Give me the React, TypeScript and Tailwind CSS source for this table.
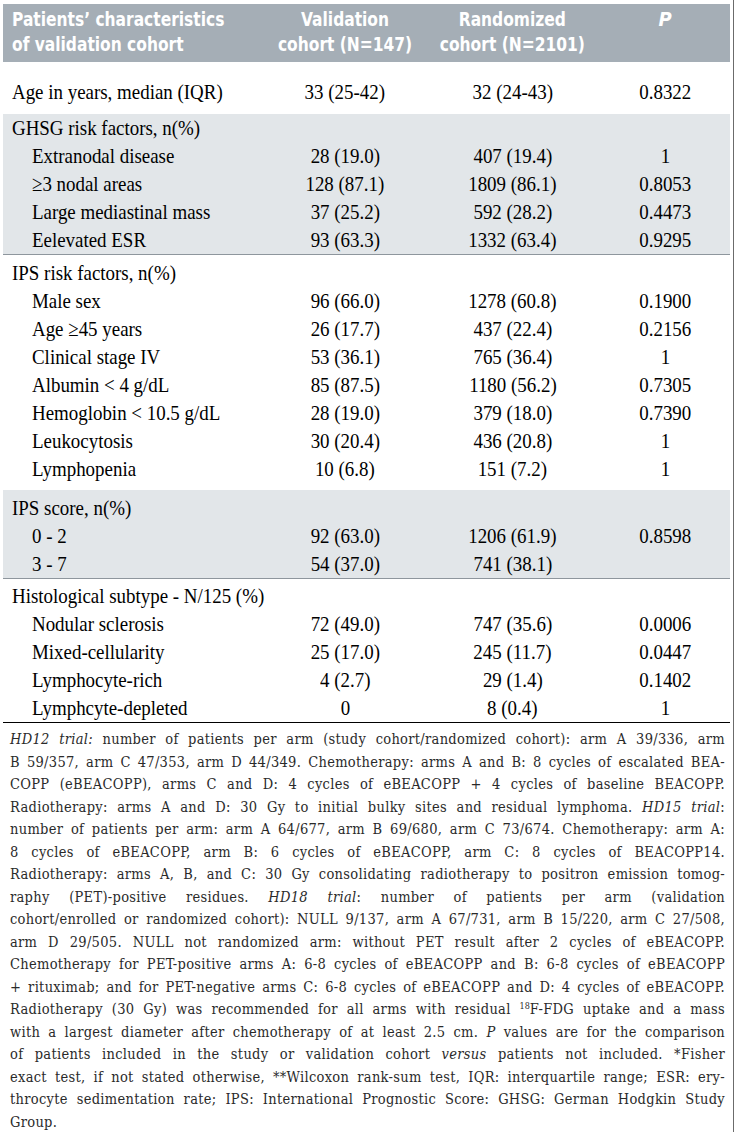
import React from "react";

type Row = [string, string, string, string];

const ghsg: Row[] = [
  ["Extranodal disease", "28 (19.0)", "407 (19.4)", "1"],
  ["≥3 nodal areas", "128 (87.1)", "1809 (86.1)", "0.8053"],
  ["Large mediastinal mass", "37 (25.2)", "592 (28.2)", "0.4473"],
  ["Eelevated ESR", "93 (63.3)", "1332 (63.4)", "0.9295"],
];

const ips: Row[] = [
  ["Male sex", "96 (66.0)", "1278 (60.8)", "0.1900"],
  ["Age ≥45 years", "26 (17.7)", "437 (22.4)", "0.2156"],
  ["Clinical stage IV", "53 (36.1)", "765 (36.4)", "1"],
  ["Albumin < 4 g/dL", "85 (87.5)", "1180 (56.2)", "0.7305"],
  ["Hemoglobin < 10.5 g/dL", "28 (19.0)", "379 (18.0)", "0.7390"],
  ["Leukocytosis", "30 (20.4)", "436 (20.8)", "1"],
  ["Lymphopenia", "10 (6.8)", "151 (7.2)", "1"],
];

const score: Row[] = [
  ["0 - 2", "92 (63.0)", "1206 (61.9)", "0.8598"],
  ["3 - 7", "54 (37.0)", "741 (38.1)", ""],
];

const hist: Row[] = [
  ["Nodular sclerosis", "72 (49.0)", "747 (35.6)", "0.0006"],
  ["Mixed-cellularity", "25 (17.0)", "245 (11.7)", "0.0447"],
  ["Lymphocyte-rich", "4 (2.7)", "29 (1.4)", "0.1402"],
  ["Lymphcyte-depleted", "0", "8 (0.4)", "1"],
];

// condensed look: the journal face is a narrow serif, so squeeze a regular one
function Cell({ children, left }: { children: React.ReactNode; left?: boolean }) {
  return (
    <div className={left ? "" : "text-center"}>
      <span className={"inline-block whitespace-nowrap scale-x-[0.86] " + (left ? "origin-left" : "origin-center")}>
        {children}
      </span>
    </div>
  );
}

function DataRow({ row, indent = true }: { row: Row; indent?: boolean }) {
  return (
    <div className="grid grid-cols-[262px_160px_175px_1fr] h-[28px] leading-[28px]">
      <div className={indent ? "pl-[29px]" : "pl-[9px]"}>
        <Cell left>{row[0]}</Cell>
      </div>
      <Cell>{row[1]}</Cell>
      <Cell>{row[2]}</Cell>
      <Cell>{row[3]}</Cell>
    </div>
  );
}

function Title({ text }: { text: string }) {
  return (
    <div className="h-[28px] leading-[28px] pl-[9px]">
      <Cell left>{text}</Cell>
    </div>
  );
}

const notes: React.ReactNode[] = [
  <><i>HD12 trial:</i> number of patients per arm (study cohort/randomized cohort): arm A 39/336, arm</>,
  <>B 59/357, arm C 47/353, arm D 44/349. Chemotherapy: arms A and B: 8 cycles of escalated BEA-</>,
  <>COPP (eBEACOPP), arms C and D: 4 cycles of eBEACOPP + 4 cycles of baseline BEACOPP.</>,
  <>Radiotherapy: arms A and D: 30 Gy to initial bulky sites and residual lymphoma. <i>HD15 trial</i>:</>,
  <>number of patients per arm: arm A 64/677, arm B 69/680, arm C 73/674. Chemotherapy: arm A:</>,
  <>8 cycles of eBEACOPP, arm B: 6 cycles of eBEACOPP, arm C: 8 cycles of BEACOPP14.</>,
  <>Radiotherapy: arms A, B, and C: 30 Gy consolidating radiotherapy to positron emission tomog-</>,
  <>raphy (PET)-positive residues. <i>HD18 trial</i>: number of patients per arm (validation</>,
  <>cohort/enrolled or randomized cohort): NULL 9/137, arm A 67/731, arm B 15/220, arm C 27/508,</>,
  <>arm D 29/505. NULL not randomized arm: without PET result after 2 cycles of eBEACOPP.</>,
  <>Chemotherapy for PET-positive arms A: 6-8 cycles of eBEACOPP and B: 6-8 cycles of eBEACOPP</>,
  <>+ rituximab; and for PET-negative arms C: 6-8 cycles of eBEACOPP and D: 4 cycles of eBEACOPP.</>,
  <>
    Radiotherapy (30 Gy) was recommended for all arms with residual{" "}
    <span className="text-[9px] leading-none align-[5px] tracking-normal">18</span>F-FDG uptake and a mass
  </>,
  <>with a largest diameter after chemotherapy of at least 2.5 cm. <i>P</i> values are for the comparison</>,
  <>of patients included in the study or validation cohort <i>versus</i> patients not included. *Fisher</>,
  <>exact test, if not stated otherwise, **Wilcoxon rank-sum test, IQR: interquartile range; ESR: ery-</>,
  <>throcyte sedimentation rate; IPS: International Prognostic Score: GHSG: German Hodgkin Study</>,
];

export default function App() {
  return (
    <div className="w-[734px] h-[1132px] overflow-hidden bg-white border-r border-[#6b6b6b] pt-[4px] px-[3px]">
      {/* header */}
      <div
        className="grid grid-cols-[262px_160px_175px_1fr] h-[58px] bg-[#a5aeb6] text-white font-bold text-[20px] leading-[25px] pt-[3px] [font-stretch:condensed]"
        style={{ fontFamily: '"DejaVu Sans Condensed", "DejaVu Sans", sans-serif' }}
      >
        <div className="pl-[9px]">
          <span className="inline-block whitespace-nowrap scale-x-[0.86] origin-left">
            Patients’ characteristics
            <br />
            of validation cohort
          </span>
        </div>
        <div className="text-center">
          <span className="inline-block whitespace-nowrap scale-x-[0.86]">
            Validation
            <br />
            cohort (N=147)
          </span>
        </div>
        <div className="text-center">
          <span className="inline-block whitespace-nowrap scale-x-[0.86]">
            Randomized
            <br />
            cohort (N=2101)
          </span>
        </div>
        <div className="text-center italic">P</div>
      </div>

      <div className="text-[22px] text-black" style={{ fontFamily: '"Liberation Serif", serif' }}>
        <div className="pt-[16px] pb-[8px]">
          <DataRow row={["Age in years, median (IQR)", "33 (25-42)", "32 (24-43)", "0.8322"]} indent={false} />
        </div>

        <div className="bg-[#e2e6e9] border-b border-[#8e969d]">
          <Title text="GHSG risk factors, n(%)" />
          {ghsg.map((r, i) => (
            <DataRow key={i} row={r} />
          ))}
        </div>

        <div className="pt-[4px] pb-[7px]">
          <Title text="IPS risk factors, n(%)" />
          {ips.map((r, i) => (
            <DataRow key={i} row={r} />
          ))}
        </div>

        <div className="bg-[#e2e6e9] border-b border-[#8e969d] pt-[4px]">
          <Title text="IPS score, n(%)" />
          {score.map((r, i) => (
            <DataRow key={i} row={r} />
          ))}
        </div>

        <div className="pt-[3px] border-b border-black">
          <Title text="Histological subtype - N/125 (%)" />
          {hist.map((r, i) => (
            <DataRow key={i} row={r} />
          ))}
        </div>
      </div>

      {/* footnote */}
      <div
        className="pl-[7px] pr-[5px] pt-[5px] text-[14.5px] tracking-[0.3px] leading-[22.5px] text-[#2a2a2a] [font-stretch:condensed]"
        style={{ fontFamily: '"DejaVu Serif Condensed", "DejaVu Serif", serif' }}
      >
        {notes.map((n, i) => (
          <div key={i} className="whitespace-nowrap text-justify [text-align-last:justify]">
            {n}
          </div>
        ))}
        <div>Group.</div>
      </div>
    </div>
  );
}
